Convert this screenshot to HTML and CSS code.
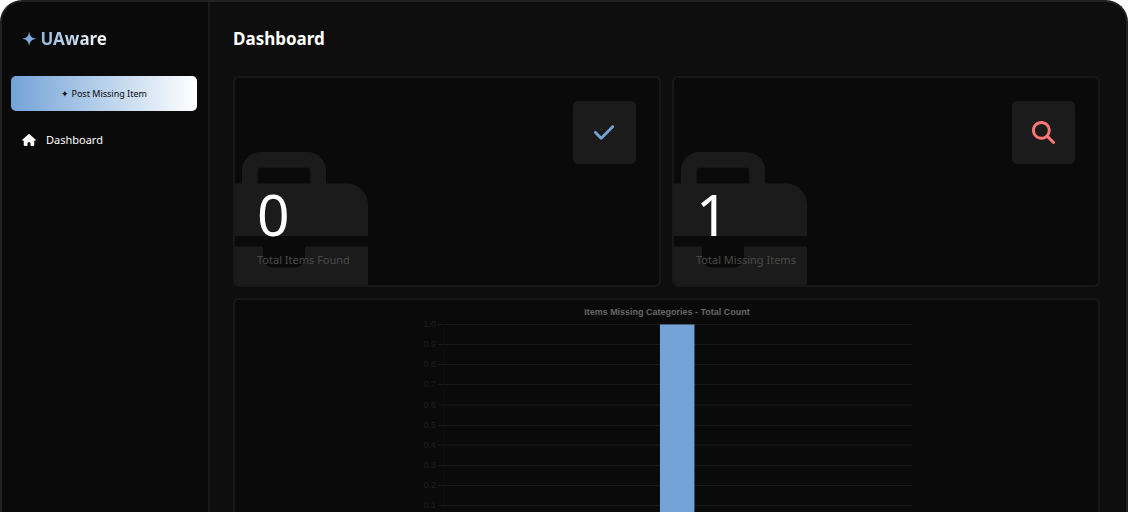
FILE: index.html
```html
<!DOCTYPE html>
<html lang="en">
<head>
<meta charset="utf-8">
<meta name="viewport" content="width=device-width, initial-scale=1">
<title>UAware</title>
<link rel="stylesheet" href="styles.css">
</head>
<body>
<svg class="symbols" aria-hidden="true">
  <symbol id="briefcase" viewBox="0 0 512 512"><path d="M184 48H328c4.400 0 8 3.600 8 8V96H176V56c0-4.400 3.600-8 8-8zm-56 8V96H64C28.700 96 0 124.700 0 160v96H192 320 512V160c0-35.300-28.700-64-64-64H384V56c0-30.900-25.100-56-56-56H184c-30.900 0-56 25.100-56 56zM512 288H320v32c0 17.700-14.300 32-32 32H224c-17.700 0-32-14.300-32-32V288H0V416c0 35.300 28.700 64 64 64H448c35.300 0 64-28.700 64-64V288z"/></symbol>
</svg>
<div class="app">
  <aside class="sidebar">
    <div class="logo"><span class="logo-text">✦ UAware</span></div>
    <button class="post" type="button">✦ Post Missing Item</button>
    <nav>
      <a class="nav-link" href="#">
        <svg class="nav-icon" viewBox="0 0 576 512" aria-hidden="true"><path d="M575.8 255.5c0 18-15 32.100-32 32.100h-32l.7 160.200c0 2.700-.2 5.400-.5 8.100V472c0 22.100-17.900 40-40 40H456c-1.100 0-2.200 0-3.300-.1c-1.400 .1-2.800 .1-4.200 .1H416 392c-22.100 0-40-17.900-40-40V448 384c0-17.700-14.300-32-32-32H256c-17.700 0-32 14.300-32 32v64 24c0 22.100-17.900 40-40 40H160 128.100c-1.500 0-3-.1-4.500-.2c-1.200 .1-2.400 .2-3.600 .2H104c-22.100 0-40-17.900-40-40V360c0-.9 0-1.900 .1-2.800V287.600H32c-18 0-32-14-32-32.100c0-9 3-17 10-24L266.400 8c7-7 15-8 22-8s15 2 21 7L564.800 231.500c8 7 12 15 11 24z"/></svg>
        Dashboard
      </a>
    </nav>
  </aside>
  <main class="main">
    <h1 class="title">Dashboard</h1>
    <div class="stats">
      <section class="card stat">
        <svg class="backdrop" aria-hidden="true"><use href="#briefcase"/></svg>
        <div class="tile found">
          <svg class="tile-icon" viewBox="0 0 448 512" aria-hidden="true"><path d="M438.600 105.400c12.500 12.500 12.500 32.800 0 45.300l-256 256c-12.500 12.500-32.800 12.500-45.300 0l-128-128c-12.500-12.500-12.500-32.800 0-45.300s32.800-12.500 45.300 0L160 338.700 393.400 105.400c12.500-12.500 32.800-12.500 45.300 0z"/></svg>
        </div>
        <div class="figures">
          <p class="number">0</p>
          <p class="label">Total Items Found</p>
        </div>
      </section>
      <section class="card stat">
        <svg class="backdrop" aria-hidden="true"><use href="#briefcase"/></svg>
        <div class="tile missing">
          <svg class="tile-icon" viewBox="0 0 512 512" aria-hidden="true"><path d="M416 208c0 45.900-14.900 88.300-40 122.700L502.600 457.400c12.500 12.500 12.500 32.800 0 45.300s-32.800 12.500-45.300 0L330.700 376c-34.400 25.200-76.800 40-122.700 40C93.100 416 0 322.900 0 208S93.100 0 208 0S416 93.100 416 208zM208 352a144 144 0 1 0 0-288 144 144 0 1 0 0 288z"/></svg>
        </div>
        <div class="figures">
          <p class="number">1</p>
          <p class="label">Total Missing Items</p>
        </div>
      </section>
    </div>
    <section class="card chart-card">
      <svg class="chart" viewBox="0 0 492 246" role="img" aria-label="Items Missing Categories - Total Count">
        <text class="chart-title" x="246" y="15">Items Missing Categories - Total Count</text>
        <g class="grid">
          <path d="M17 24.500H492M17 44.500H492M17 64.500H492M17 84.500H492M17 105H492M17 125.500H492M17 145H492M17 165.500H492M17 185.500H492M17 205.500H492M17 225.500H492"/>
          <path class="axis" d="M22.500 24V231"/>
        </g>
        <g class="ticks">
          <text x="15" y="27">1.0</text>
          <text x="15" y="47">0.9</text>
          <text x="15" y="67">0.8</text>
          <text x="15" y="87">0.7</text>
          <text x="15" y="108">0.6</text>
          <text x="15" y="128">0.5</text>
          <text x="15" y="148">0.4</text>
          <text x="15" y="168">0.3</text>
          <text x="15" y="188">0.2</text>
          <text x="15" y="208">0.1</text>
        </g>
        <rect class="bar" x="239" y="24.500" width="34.500" height="201"/>
      </svg>
    </section>
  </main>
</div>
</body>
</html>
```
FILE: styles.css
```css
* {
  box-sizing: border-box;
}

body {
  margin: 0;
  background: #fff;
  color: #fff;
  font-family: "Noto Sans", "Open Sans", sans-serif;
}

h1,
p {
  margin: 0;
}

.symbols {
  position: absolute;
  width: 0;
  height: 0;
}

.app {
  display: flex;
  height: 100vh;
  overflow: hidden;
  background: #0e0e0e;
  border: 2px solid #222;
  border-bottom: 0;
  border-radius: 22px 22px 0 0;
}

.sidebar {
  flex: 0 0 208px;
  padding: 25px 11px 0 9px;
  background: #0a0a0a;
  border-right: 2px solid #181818;
}

.logo {
  padding-left: 11px;
  font-size: 17px;
  font-weight: 700;
  line-height: 24px;
}

.logo-text {
  background: linear-gradient(to right, #73a3d7, #fff);
  background-clip: text;
  -webkit-background-clip: text;
  color: transparent;
}

.post {
  display: block;
  width: 100%;
  height: 35px;
  margin-top: 25px;
  padding: 0;
  border: 0;
  border-radius: 5px;
  background: linear-gradient(to right, #73a3d7, #fff);
  color: #0a0a0a;
  font: 9px "Noto Sans", "Open Sans", sans-serif;
}

.nav-link {
  display: flex;
  align-items: center;
  gap: 10px;
  margin-top: 20px;
  padding-left: 11px;
  color: #fff;
  font-size: 11px;
  line-height: 18px;
  text-decoration: none;
}

.nav-icon {
  width: 14px;
  height: 12px;
  fill: #fff;
}

.main {
  flex: 1;
  min-width: 0;
  padding: 25px 26px 0 23px;
}

.title {
  font-size: 17px;
  font-weight: 700;
  line-height: 24px;
}

.stats {
  display: grid;
  grid-template-columns: 1fr 1fr;
  gap: 11px;
  margin-top: 25px;
}

.card {
  background: #0a0a0a;
  border: 2px solid #181818;
  border-radius: 6px;
}

.stat {
  position: relative;
  display: flex;
  flex-direction: column;
  padding: 23px 23px 17px 22px;
  overflow: hidden;
}

.backdrop {
  position: absolute;
  top: 74px;
  left: -35px;
  width: 168px;
  height: 168px;
  fill: #1b1b1b;
}

.tile {
  display: flex;
  align-items: center;
  justify-content: center;
  align-self: flex-end;
  width: 63px;
  height: 63px;
  border-radius: 5px;
  background: #1b1b1b;
}

.tile-icon {
  height: 23px;
}

.found {
  fill: #73a3d7;
}

.missing {
  fill: #ff7675;
}

.figures {
  position: relative;
  margin-top: 15px;
}

.number {
  margin-bottom: 3px;
  font-size: 57px;
  line-height: 70px;
}

.label {
  color: #4a4a4a;
  font-size: 11px;
  line-height: 16px;
}

.chart-card {
  margin-top: 11px;
}

.chart {
  display: block;
  width: 57%;
  margin: 0 auto;
}

.chart-title {
  fill: #666;
  font: bold 9px "Liberation Sans", Arial, sans-serif;
  text-anchor: middle;
}

.grid {
  fill: none;
  stroke: #1b1b1b;
}

.axis {
  stroke: #111;
}

.ticks {
  fill: #1e1e1e;
  font: 9px "Liberation Sans", Arial, sans-serif;
  text-anchor: end;
}

.bar {
  fill: #73a3d7;
}
```
